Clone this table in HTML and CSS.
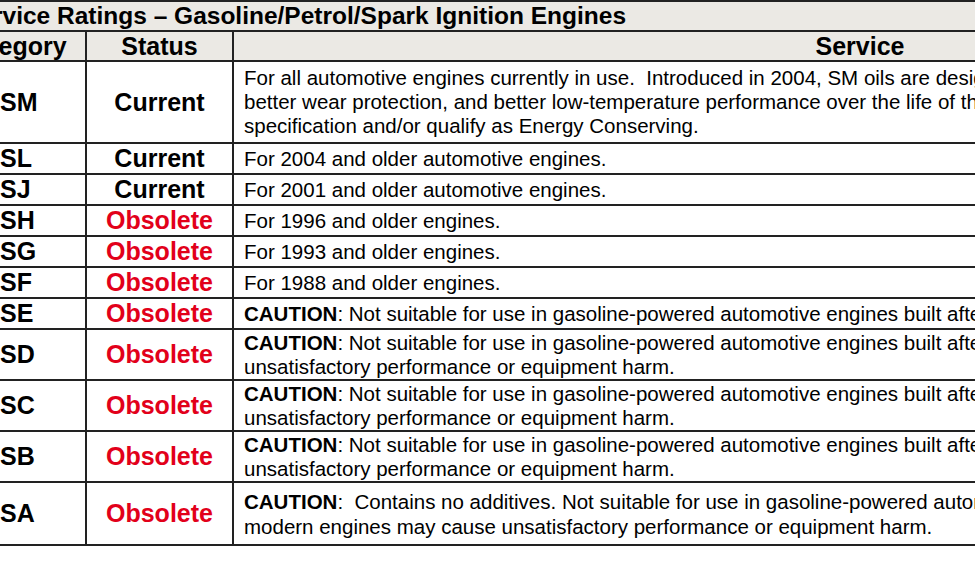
FILE: index.html
```html
<!DOCTYPE html>
<html lang="en">
<head>
<meta charset="utf-8">
<title>Service Ratings – Gasoline/Petrol/Spark Ignition Engines</title>
<link rel="stylesheet" href="styles.css">
</head>
<body>
<div class="viewport">
  <table class="ratings">
    <colgroup>
      <col class="c-cat">
      <col class="c-status">
      <col class="c-service">
    </colgroup>
    <thead>
      <tr class="r-title"><th class="title" colspan="3">Service Ratings – Gasoline/Petrol/Spark Ignition Engines</th></tr>
      <tr class="r-head"><th class="h-cat">Category</th><th>Status</th><th>Service</th></tr>
    </thead>
    <tbody>
      <tr class="r-3"><td class="cat">SM</td><td class="status cur">Current</td><td class="svc">For all automotive engines currently in use.&nbsp; Introduced in 2004, SM oils are designed to provide improved oxidation resistance, improved deposit protection,<br>better wear protection, and better low-temperature performance over the life of the oil. Some SM oils may also meet the latest ILSAC<br>specification and/or qualify as Energy Conserving.</td></tr>
      <tr class="r-1"><td class="cat">SL</td><td class="status cur">Current</td><td class="svc">For 2004 and older automotive engines.</td></tr>
      <tr class="r-1"><td class="cat">SJ</td><td class="status cur">Current</td><td class="svc">For 2001 and older automotive engines.</td></tr>
      <tr class="r-1"><td class="cat">SH</td><td class="status obs">Obsolete</td><td class="svc">For 1996 and older engines.</td></tr>
      <tr class="r-1"><td class="cat">SG</td><td class="status obs">Obsolete</td><td class="svc">For 1993 and older engines.</td></tr>
      <tr class="r-1"><td class="cat">SF</td><td class="status obs">Obsolete</td><td class="svc">For 1988 and older engines.</td></tr>
      <tr class="r-1"><td class="cat">SE</td><td class="status obs">Obsolete</td><td class="svc"><b>CAUTION</b>: Not suitable for use in gasoline-powered automotive engines built after 1979.</td></tr>
      <tr class="r-2"><td class="cat">SD</td><td class="status obs">Obsolete</td><td class="svc"><b>CAUTION</b>: Not suitable for use in gasoline-powered automotive engines built after 1971. Use in more modern engines may cause<br>unsatisfactory performance or equipment harm.</td></tr>
      <tr class="r-2"><td class="cat">SC</td><td class="status obs">Obsolete</td><td class="svc"><b>CAUTION</b>: Not suitable for use in gasoline-powered automotive engines built after 1967. Use in more modern engines may cause<br>unsatisfactory performance or equipment harm.</td></tr>
      <tr class="r-2"><td class="cat">SB</td><td class="status obs">Obsolete</td><td class="svc"><b>CAUTION</b>: Not suitable for use in gasoline-powered automotive engines built after 1951. Use in more modern engines may cause<br>unsatisfactory performance or equipment harm.</td></tr>
      <tr class="r-sa"><td class="cat">SA</td><td class="status obs">Obsolete</td><td class="svc"><b>CAUTION</b>:&nbsp; Contains no additives. Not suitable for use in gasoline-powered automotive engines built after 1930. Use in<br>modern engines may cause unsatisfactory performance or equipment harm.</td></tr>
    </tbody>
  </table>
</div>
</body>
</html>
```

FILE: styles.css
```css
html, body {
  margin: 0;
  padding: 0;
  background: #ffffff;
}

.viewport {
  width: 975px;
  height: 579px;
  overflow: hidden;
  background: #ffffff;
}

.ratings {
  margin-left: -54px;
  width: 1540px;
  border-collapse: collapse;
  table-layout: fixed;
  font-family: "Liberation Sans", Arial, sans-serif;
  color: #000;
}

.c-cat { width: 139px; }
.c-status { width: 147px; }
.c-service { width: 1254px; }

.ratings th,
.ratings td {
  border: 2px solid #222;
  padding: 0 10px;
  vertical-align: middle;
}

.ratings thead th {
  background: #ebe9e4;
  font-weight: bold;
  font-size: 25px;
  line-height: 26px;
  text-align: center;
  height: 28px;
}

.ratings thead th.h-cat {
  padding-right: 18px;
}

.ratings thead th.title {
  text-align: left;
  padding-left: 15px;
  font-size: 24.5px;
  height: 28px;
}

.cat {
  font-weight: bold;
  font-size: 25px;
  padding-left: 52px !important;
  text-align: left;
}

.status {
  font-weight: bold;
  font-size: 25px;
  text-align: center;
}

.cur { color: #000; }
.obs { color: #e2001a; }

.svc {
  font-size: 20.5px;
  line-height: 24px;
  white-space: nowrap;
}

.svc b { font-weight: bold; }

.r-1 td { height: 29px; }
.r-2 td { height: 49px; }
.r-3 td { height: 80px; }
.r-sa td { height: 61px; line-height: 25px; }
```
